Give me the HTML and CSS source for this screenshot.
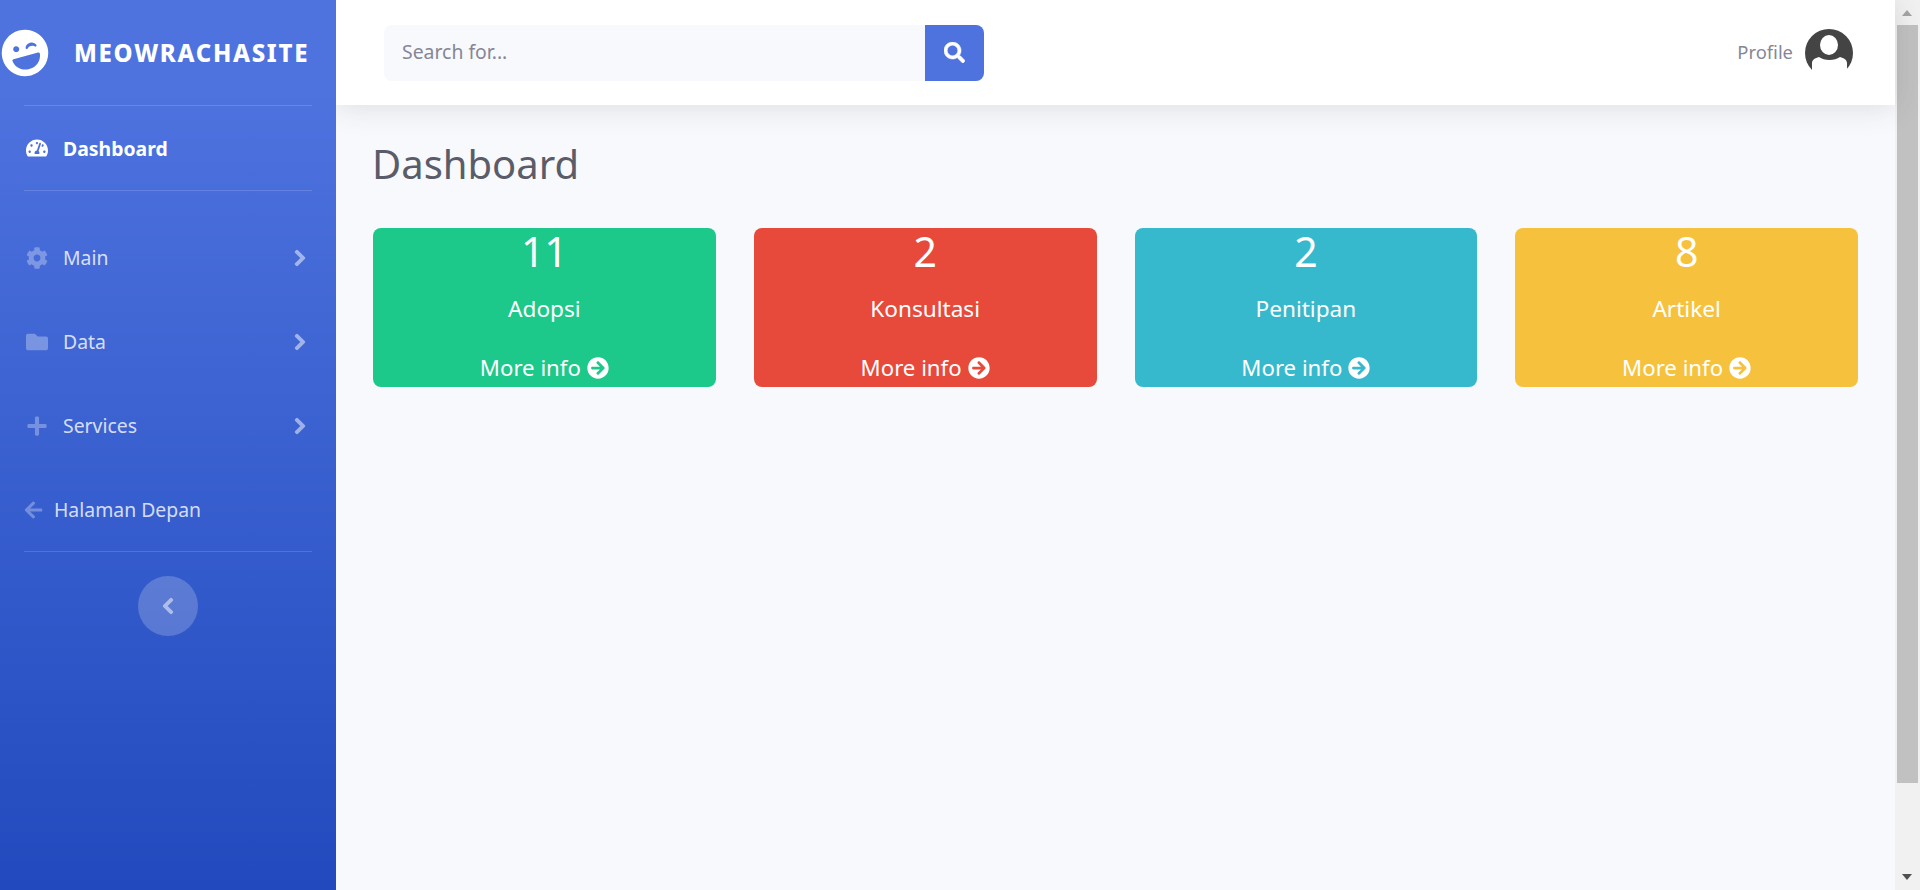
FILE: index.html
```html
<!DOCTYPE html>
<html lang="id">
<head>
<meta charset="utf-8">
<title>Dashboard</title>
<link rel="stylesheet" href="styles.css">
</head>
<body>
<div class="app">
  <aside class="sidebar">
    <a class="brand">
      <svg class="brand-icon" viewBox="0 0 496 512"><path d="M248 8C111 8 0 119 0 256s111 248 248 248 248-111 248-248S385 8 248 8zm20.1 198.1c4-25.2 34.2-42.1 59.9-42.1s55.9 16.9 59.9 42.1c1.7 11.1-11.4 18.3-19.8 10.8l-9.5-8.5c-14.8-13.2-46.2-13.2-61 0L288 217c-8.4 7.4-21.6.3-19.9-10.9zM168 160c17.7 0 32 14.3 32 32s-14.3 32-32 32-32-14.3-32-32 14.3-32 32-32zm230.9 146C390 377 329.4 432 256 432h-16c-73.4 0-134-55-142.9-126-1.2-9.5 6.3-18 15.9-18h270c9.6 0 17.1 8.4 15.9 18z"/></svg>
      <span class="brand-text">MEOWRACHASITE</span>
    </a>
    <hr class="divider">
    <a class="nav-item active">
      <svg class="nav-icon" viewBox="0 0 576 512"><path d="M288 32C128.94 32 0 160.94 0 320c0 52.8 14.25 102.26 39.06 144.8 5.61 9.62 16.3 15.2 27.44 15.2h443c11.14 0 21.83-5.58 27.44-15.2C561.75 422.26 576 372.8 576 320c0-159.06-128.94-288-288-288zm0 64c14.71 0 26.58 10.13 30.32 23.65-1.11 2.26-2.64 4.23-3.45 6.67l-9.22 27.67c-5.13 3.49-10.97 6.01-17.64 6.01-17.67 0-32-14.33-32-32S270.33 96 288 96zM96 384c-17.67 0-32-14.33-32-32s14.33-32 32-32 32 14.33 32 32-14.33 32-32 32zm48-160c-17.67 0-32-14.33-32-32s14.33-32 32-32 32 14.33 32 32-14.33 32-32 32zm246.77-72.41l-61.33 184C343.13 347.33 352 364.54 352 384c0 11.72-3.38 22.55-8.88 32H232.88c-5.5-9.45-8.88-20.28-8.88-32 0-33.94 26.5-61.43 59.9-63.59l61.34-184.01c4.17-12.56 17.73-19.45 30.36-15.17 12.57 4.19 19.35 17.79 15.17 30.36zm14.66 57.2l15.52-46.55c3.47-1.29 7.13-2.23 11.05-2.23 17.67 0 32 14.33 32 32s-14.33 32-32 32c-11.38-.01-20.89-6.28-26.57-15.22zM480 384c-17.67 0-32-14.33-32-32s14.33-32 32-32 32 14.33 32 32-14.33 32-32 32z"/></svg>
      <span>Dashboard</span>
    </a>
    <hr class="divider">
    <nav class="nav-list">
      <a class="nav-item">
        <svg class="nav-icon" viewBox="0 0 512 512"><path d="M487.4 315.7l-42.6-24.6c4.3-23.2 4.3-47 0-70.2l42.6-24.6c4.9-2.8 7.1-8.6 5.5-14-11.1-35.6-30-67.8-54.7-94.6-3.8-4.1-10-5.1-14.8-2.3L380.8 110c-17.9-15.4-38.5-27.3-60.8-35.1V25.8c0-5.6-3.9-10.5-9.4-11.7-36.7-8.2-74.3-7.8-109.2 0-5.5 1.2-9.4 6.1-9.4 11.7V75c-22.2 7.9-42.8 19.8-60.8 35.1L88.7 85.5c-4.9-2.8-11-1.9-14.8 2.3-24.7 26.7-43.6 58.9-54.7 94.6-1.7 5.4.6 11.2 5.5 14L67.3 221c-4.3 23.2-4.3 47 0 70.2l-42.6 24.6c-4.9 2.8-7.1 8.6-5.5 14 11.1 35.6 30 67.8 54.7 94.6 3.8 4.1 10 5.1 14.8 2.3l42.6-24.6c17.9 15.4 38.5 27.3 60.8 35.1v49.2c0 5.6 3.9 10.5 9.4 11.7 36.7 8.2 74.3 7.8 109.2 0 5.5-1.2 9.4-6.1 9.4-11.7v-49.2c22.2-7.9 42.8-19.8 60.8-35.1l42.6 24.6c4.9 2.8 11 1.9 14.8-2.3 24.7-26.7 43.6-58.9 54.7-94.6 1.5-5.5-.7-11.3-5.6-14.1zM256 336c-44.1 0-80-35.9-80-80s35.9-80 80-80 80 35.9 80 80-35.9 80-80 80z"/></svg>
        <span class="nav-label">Main</span>
        <svg class="chevron" viewBox="0 0 320 512"><path d="M285.476 272.971L91.132 467.314c-9.373 9.373-24.569 9.373-33.941 0l-22.667-22.667c-9.357-9.357-9.375-24.522-.04-33.901L188.505 256 34.484 101.255c-9.335-9.379-9.317-24.544.04-33.901l22.667-22.667c9.373-9.373 24.569-9.373 33.941 0L285.475 239.03c9.373 9.372 9.373 24.568.001 33.941z"/></svg>
      </a>
      <a class="nav-item">
        <svg class="nav-icon" viewBox="0 0 512 512"><path d="M464 128H272l-64-64H48C21.49 64 0 85.49 0 112v288c0 26.51 21.49 48 48 48h416c26.51 0 48-21.49 48-48V176c0-26.51-21.49-48-48-48z"/></svg>
        <span class="nav-label">Data</span>
        <svg class="chevron" viewBox="0 0 320 512"><path d="M285.476 272.971L91.132 467.314c-9.373 9.373-24.569 9.373-33.941 0l-22.667-22.667c-9.357-9.357-9.375-24.522-.04-33.901L188.505 256 34.484 101.255c-9.335-9.379-9.317-24.544.04-33.901l22.667-22.667c9.373-9.373 24.569-9.373 33.941 0L285.475 239.03c9.373 9.372 9.373 24.568.001 33.941z"/></svg>
      </a>
      <a class="nav-item">
        <svg class="nav-icon" viewBox="0 0 448 512"><path d="M416 208H272V64c0-17.67-14.33-32-32-32h-32c-17.67 0-32 14.33-32 32v144H32c-17.67 0-32 14.33-32 32v32c0 17.67 14.33 32 32 32h144v144c0 17.67 14.33 32 32 32h32c17.67 0 32-14.33 32-32V304h144c17.67 0 32-14.33 32-32v-32c0-17.67-14.33-32-32-32z"/></svg>
        <span class="nav-label">Services</span>
        <svg class="chevron" viewBox="0 0 320 512"><path d="M285.476 272.971L91.132 467.314c-9.373 9.373-24.569 9.373-33.941 0l-22.667-22.667c-9.357-9.357-9.375-24.522-.04-33.901L188.505 256 34.484 101.255c-9.335-9.379-9.317-24.544.04-33.901l22.667-22.667c9.373-9.373 24.569-9.373 33.941 0L285.475 239.03c9.373 9.372 9.373 24.568.001 33.941z"/></svg>
      </a>
      <a class="nav-item back">
        <svg class="back-icon" viewBox="0 0 448 512"><path d="M257.5 445.1l-22.2 22.2c-9.4 9.4-24.6 9.4-33.9 0L7 273c-9.4-9.4-9.4-24.6 0-33.9L201.4 44.7c9.4-9.4 24.6-9.4 33.9 0l22.2 22.2c9.5 9.5 9.3 25-.4 34.3L136.6 216H424c13.3 0 24 10.7 24 24v32c0 13.3-10.7 24-24 24H136.6l120.5 114.8c9.8 9.3 10 24.8.4 34.3z"/></svg>
        <span>Halaman Depan</span>
      </a>
    </nav>
    <hr class="divider">
    <button class="toggle" type="button" aria-label="Toggle sidebar">
      <svg class="toggle-icon" viewBox="0 0 320 512"><path d="M34.52 239.03L228.87 44.69c9.37-9.37 24.57-9.37 33.94 0l22.67 22.67c9.36 9.36 9.37 24.52.04 33.9L131.49 256l154.02 154.75c9.34 9.38 9.32 24.54-.04 33.9l-22.67 22.67c-9.37 9.37-24.57 9.37-33.94 0L34.52 272.97c-9.37-9.37-9.37-24.57 0-33.94z"/></svg>
    </button>
  </aside>

  <div class="main">
    <header class="topbar">
      <form class="search">
        <input class="search-input" type="text" placeholder="Search for...">
        <button class="search-btn" type="button" aria-label="Search">
          <svg class="search-icon" viewBox="0 0 512 512"><path d="M505 442.7L405.3 343c-4.5-4.5-10.6-7-17-7H372c27.6-35.3 44-79.7 44-128C416 93.1 322.9 0 208 0S0 93.1 0 208s93.1 208 208 208c48.3 0 92.7-16.4 128-44v16.3c0 6.4 2.5 12.5 7 17l99.7 99.7c9.4 9.4 24.6 9.4 33.9 0l28.3-28.3c9.4-9.4 9.4-24.6.1-34zM208 336c-70.7 0-128-57.2-128-128 0-70.7 57.2-128 128-128 70.7 0 128 57.2 128 128 0 70.7-57.2 128-128 128z"/></svg>
        </button>
      </form>
      <div class="profile">
        <span class="profile-name">Profile</span>
        <svg class="avatar" viewBox="0 0 48 48">
          <circle cx="24" cy="24" r="24" fill="#444"/>
          <ellipse cx="24" cy="16" rx="9" ry="10" fill="#fff"/>
          <path d="M0 48V42H7V34C7 31 10 29 14 28c3 2 6 3 10.500 3s7.500-1 10.500-3c4 1 7 3 7 6v8h6v6z" fill="#fff"/>
        </svg>
      </div>
    </header>

    <main class="content">
      <h1 class="page-title">Dashboard</h1>
      <section class="cards">
        <article class="card green">
          <div class="card-num">11</div>
          <div class="card-label">Adopsi</div>
          <a class="card-link">More info <svg class="circle-icon" viewBox="0 0 512 512"><path d="M256 8c137 0 248 111 248 248S393 504 256 504 8 393 8 256 119 8 256 8zm-28.9 143.6l75.5 72.4H120c-13.3 0-24 10.7-24 24v16c0 13.3 10.7 24 24 24h182.6l-75.5 72.4c-9.7 9.3-9.9 24.8-.4 34.3l11 10.9c9.4 9.4 24.6 9.4 33.9 0L404.3 273c9.4-9.4 9.4-24.6 0-33.9L271.6 106.3c-9.4-9.4-24.6-9.4-33.9 0l-11 10.9c-9.5 9.6-9.3 25.1.4 34.4z"/></svg></a>
        </article>
        <article class="card red">
          <div class="card-num">2</div>
          <div class="card-label">Konsultasi</div>
          <a class="card-link">More info <svg class="circle-icon" viewBox="0 0 512 512"><path d="M256 8c137 0 248 111 248 248S393 504 256 504 8 393 8 256 119 8 256 8zm-28.9 143.6l75.5 72.4H120c-13.3 0-24 10.7-24 24v16c0 13.3 10.7 24 24 24h182.6l-75.5 72.4c-9.7 9.3-9.9 24.8-.4 34.3l11 10.9c9.4 9.4 24.6 9.4 33.9 0L404.3 273c9.4-9.4 9.4-24.6 0-33.9L271.6 106.3c-9.4-9.4-24.6-9.4-33.9 0l-11 10.9c-9.5 9.6-9.3 25.1.4 34.4z"/></svg></a>
        </article>
        <article class="card cyan">
          <div class="card-num">2</div>
          <div class="card-label">Penitipan</div>
          <a class="card-link">More info <svg class="circle-icon" viewBox="0 0 512 512"><path d="M256 8c137 0 248 111 248 248S393 504 256 504 8 393 8 256 119 8 256 8zm-28.9 143.6l75.5 72.4H120c-13.3 0-24 10.7-24 24v16c0 13.3 10.7 24 24 24h182.6l-75.5 72.4c-9.7 9.3-9.9 24.8-.4 34.3l11 10.9c9.4 9.4 24.6 9.4 33.9 0L404.3 273c9.4-9.4 9.4-24.6 0-33.9L271.6 106.3c-9.4-9.4-24.6-9.4-33.9 0l-11 10.9c-9.5 9.6-9.3 25.1.4 34.4z"/></svg></a>
        </article>
        <article class="card yellow">
          <div class="card-num">8</div>
          <div class="card-label">Artikel</div>
          <a class="card-link">More info <svg class="circle-icon" viewBox="0 0 512 512"><path d="M256 8c137 0 248 111 248 248S393 504 256 504 8 393 8 256 119 8 256 8zm-28.9 143.6l75.5 72.4H120c-13.3 0-24 10.7-24 24v16c0 13.3 10.7 24 24 24h182.6l-75.5 72.4c-9.7 9.3-9.9 24.8-.4 34.3l11 10.9c9.4 9.4 24.6 9.4 33.9 0L404.3 273c9.4-9.4 9.4-24.6 0-33.9L271.6 106.3c-9.4-9.4-24.6-9.4-33.9 0l-11 10.9c-9.5 9.6-9.3 25.1.4 34.4z"/></svg></a>
        </article>
      </section>
    </main>
  </div>

  <div class="scrollbar">
    <span class="sb-up"></span>
    <div class="sb-thumb"></div>
    <span class="sb-down"></span>
  </div>
</div>
</body>
</html>
```
FILE: styles.css
```css
* { box-sizing: border-box; }
html, body { margin: 0; height: 100%; overflow: hidden; }
body { font-family: "Noto Sans", "Liberation Sans", sans-serif; background: #f8f9fc; color: #858796; }

.app { display: flex; height: 890px; }

/* Sidebar */
.sidebar {
  position: relative;
  z-index: 2;
  flex: 0 0 336px;
  display: flex;
  flex-direction: column;
  background: linear-gradient(180deg, #4e73df 10%, #224abe 100%);
}
.brand { display: flex; align-items: center; height: 105px; padding-left: 1px; gap: 25px; }
.brand-icon { width: 48px; height: 48px; fill: #fff; transform: rotate(-15deg); }
.brand-text { color: #fff; font-weight: 800; font-size: 24px; letter-spacing: 1.7px; }
.divider { width: 288px; margin: 0 auto; border: 0; border-top: 1px solid rgba(255,255,255,.15); flex: none; }
.nav-item {
  display: flex;
  align-items: center;
  height: 84px;
  padding: 0 30px 0 26px;
  color: rgba(255,255,255,.8);
  font-size: 19.4px;
}
.nav-item.active { color: #fff; font-weight: 700; }
.nav-list { margin-top: 25px; }
.nav-list .nav-item.back { height: 83px; padding-left: 24px; }
.nav-icon { width: 22px; height: 22px; margin-right: 15px; fill: rgba(255,255,255,.3); flex: none; }
.active .nav-icon { fill: #fff; }
.back-icon { width: 19px; height: 20px; margin-right: 11px; fill: rgba(255,255,255,.3); flex: none; }
.nav-label { flex: 1; margin-bottom: 2px; }
.chevron { width: 12px; height: 18px; fill: #fff; stroke: #fff; stroke-width: 30; opacity: .5; flex: none; }
.toggle {
  display: flex;
  align-items: center;
  justify-content: center;
  width: 60px;
  height: 60px;
  margin: 24px auto 0;
  padding: 0;
  border: 0;
  border-radius: 50%;
  background: rgba(255,255,255,.2);
}
.toggle-icon { width: 12px; height: 18px; fill: #fff; stroke: #fff; stroke-width: 30; opacity: .5; }

/* Main */
.main { flex: 1; display: flex; flex-direction: column; min-width: 0; }
.topbar {
  position: relative;
  z-index: 1;
  flex: 0 0 105px;
  display: flex;
  align-items: center;
  justify-content: space-between;
  padding: 0 42px 0 48px;
  background: #fff;
  box-shadow: 0 2px 28px rgba(58,59,69,.15);
}
.search { display: flex; width: 600px; height: 56px; }
.search-input {
  flex: 1;
  min-width: 0;
  padding: 0 18px 2px;
  border: 0;
  border-radius: 8px 0 0 8px;
  outline: 0;
  background: #f8f9fc;
  font: 400 19.4px "Noto Sans", "Liberation Sans", sans-serif;
  color: #6e707e;
}
.search-input::placeholder { color: #858796; opacity: 1; }
.search-btn {
  display: flex;
  align-items: center;
  justify-content: center;
  width: 59px;
  padding: 0;
  border: 0;
  border-radius: 0 8px 8px 0;
  background: #4e73df;
}
.search-icon { width: 21px; height: 21px; fill: #fff; stroke: #fff; stroke-width: 12; }
.profile { display: flex; align-items: center; gap: 12px; }
.profile-name { font-size: 18.4px; padding-bottom: 2px; }
.avatar { width: 48px; height: 48px; display: block; }

.content { flex: 1; padding: 32px 37px 0; }
.page-title { margin: 0 0 37px -1px; font-size: 40px; line-height: 54px; font-weight: 400; color: #5a5c69; }
.cards { display: grid; grid-template-columns: repeat(4, 1fr); gap: 38px; }
.card {
  display: flex;
  flex-direction: column;
  align-items: center;
  height: 159px;
  border-radius: 8px;
  color: #fff;
}
.green { background: #1cc88a; }
.red { background: #e74a3b; }
.cyan { background: #36b9cc; }
.yellow { background: #f6c23e; }
.card-num { font-size: 41px; line-height: 46px; }
.card-label { margin-top: 20px; font-size: 22.6px; line-height: 30px; }
.card-link { margin-top: 29px; display: flex; align-items: center; gap: 6px; font-size: 22.2px; line-height: 30px; }
.circle-icon { width: 22px; height: 22px; fill: #fff; }

/* Fake browser scrollbar */
.scrollbar {
  position: relative;
  flex: 0 0 25px;
  background: #f1f1f1;
}
.sb-thumb { position: absolute; left: 2px; right: 2px; top: 25px; height: 758px; background: #c1c1c1; }
.sb-up, .sb-down { position: absolute; left: 7px; width: 0; height: 0; border-left: 5.5px solid transparent; border-right: 5.5px solid transparent; }
.sb-up { top: 10px; border-bottom: 6px solid #a3a3a3; }
.sb-down { bottom: 10px; border-top: 6px solid #505050; }
```
